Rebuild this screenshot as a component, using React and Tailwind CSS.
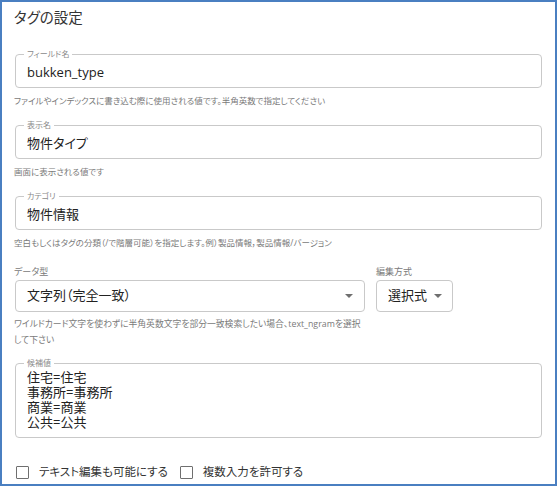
const font = "font-['Open_Sans','Noto_Sans_CJK_JP',sans-serif] [font-feature-settings:'palt']";

function OutlinedField({ label, children, contentClass = 'leading-[20px] pt-[2px] pb-[5px]' }) {
    return (
        <fieldset className="border border-[#c9c9c9] rounded-[4px] px-[11px] min-w-0">
            <legend className="px-[3px] -ml-[3px] text-[8px] leading-[12px] text-[#8a8a8a]">{label}</legend>
            <div className={`text-[13px] text-[#222] ${contentClass}`}>{children}</div>
        </fieldset>
    );
}

function Helper({ children, className = '' }) {
    return <p className={`leading-[14px] text-[#7a7a7a] ${className}`}>{children}</p>;
}

function Arrow() {
    return (
        <svg width="8" height="4" viewBox="0 0 8 4" className="shrink-0">
            <polygon points="0,0 8,0 4,4" fill="#6f6f6f" />
        </svg>
    );
}

function Checkbox({ label }) {
    return (
        <label className="flex items-center gap-[10px]">
            <span className="w-[13px] h-[13px] border border-[#6f6f6f] rounded-[1px] bg-white" />
            <span className="text-[11.5px] leading-[18px] text-[#333]">{label}</span>
        </label>
    );
}

const candidates = '住宅=住宅\n事務所=事務所\n商業=商業\n公共=公共';

export default function App() {
    return (
        <div className={`${font} w-[557px] h-[486px] border-2 border-[#4a7fc1] bg-white pl-[13px] pr-[13px] overflow-hidden`}>
            <h2 className="mt-[6px] text-[14.5px] leading-[20px] text-[#333] -ml-[1px]">タグの設定</h2>

            <div className="mt-[20px]">
                <OutlinedField label="フィールド名">bukken_type</OutlinedField>
                <Helper className="text-[8.5px] mt-[6px] -ml-[1px]">ファイルやインデックスに書き込む際に使用される値です。半角英数で指定してください</Helper>
            </div>

            <div className="mt-[11px]">
                <OutlinedField label="表示名">物件タイプ</OutlinedField>
                <Helper className="text-[8.5px] mt-[6px] -ml-[1px]">画面に表示される値です</Helper>
            </div>

            <div className="mt-[11px]">
                <OutlinedField label="カテゴリ">物件情報</OutlinedField>
                <Helper className="text-[8.5px] mt-[6px] -ml-[1px]">空白もしくはタグの分類（/で階層可能）を指定します。例）製品情報，製品情報/バージョン</Helper>
            </div>

            <div className="mt-[15px] flex gap-[11px]">
                <div className="w-[350px]">
                    <div className="text-[9px] leading-[14px] text-[#7a7a7a] -ml-[1px]">データ型</div>
                    <div className="mt-[1px] h-[32px] border border-[#c9c9c9] rounded-[4px] pl-[11px] pr-[11px] flex items-center justify-between">
                        <span className="text-[13px] text-[#222]">文字列（完全一致）</span>
                        <Arrow />
                    </div>
                    <Helper className="text-[8.8px] mt-[4px] leading-[16px] -ml-[1px]">ワイルドカード文字を使わずに半角英数文字を部分一致検索したい場合、text_ngramを選択して下さい</Helper>
                </div>
                <div className="w-[77px]">
                    <div className="text-[9px] leading-[14px] text-[#7a7a7a]">編集方式</div>
                    <div className="mt-[1px] h-[32px] border border-[#c9c9c9] rounded-[4px] pl-[11px] pr-[10px] flex items-center justify-between">
                        <span className="text-[13px] text-[#222]">選択式</span>
                        <Arrow />
                    </div>
                </div>
            </div>

            <div className="mt-[9px]">
                <OutlinedField label="候補値" contentClass="text-[12.5px] leading-[15px] pt-[1px] pb-[7px] whitespace-pre-line">
                    {candidates}
                </OutlinedField>
            </div>

            <div className="mt-[25px] flex items-center gap-[12px] pl-[1px]">
                <Checkbox label="テキスト編集も可能にする" />
                <Checkbox label="複数入力を許可する" />
            </div>
        </div>
    );
}
